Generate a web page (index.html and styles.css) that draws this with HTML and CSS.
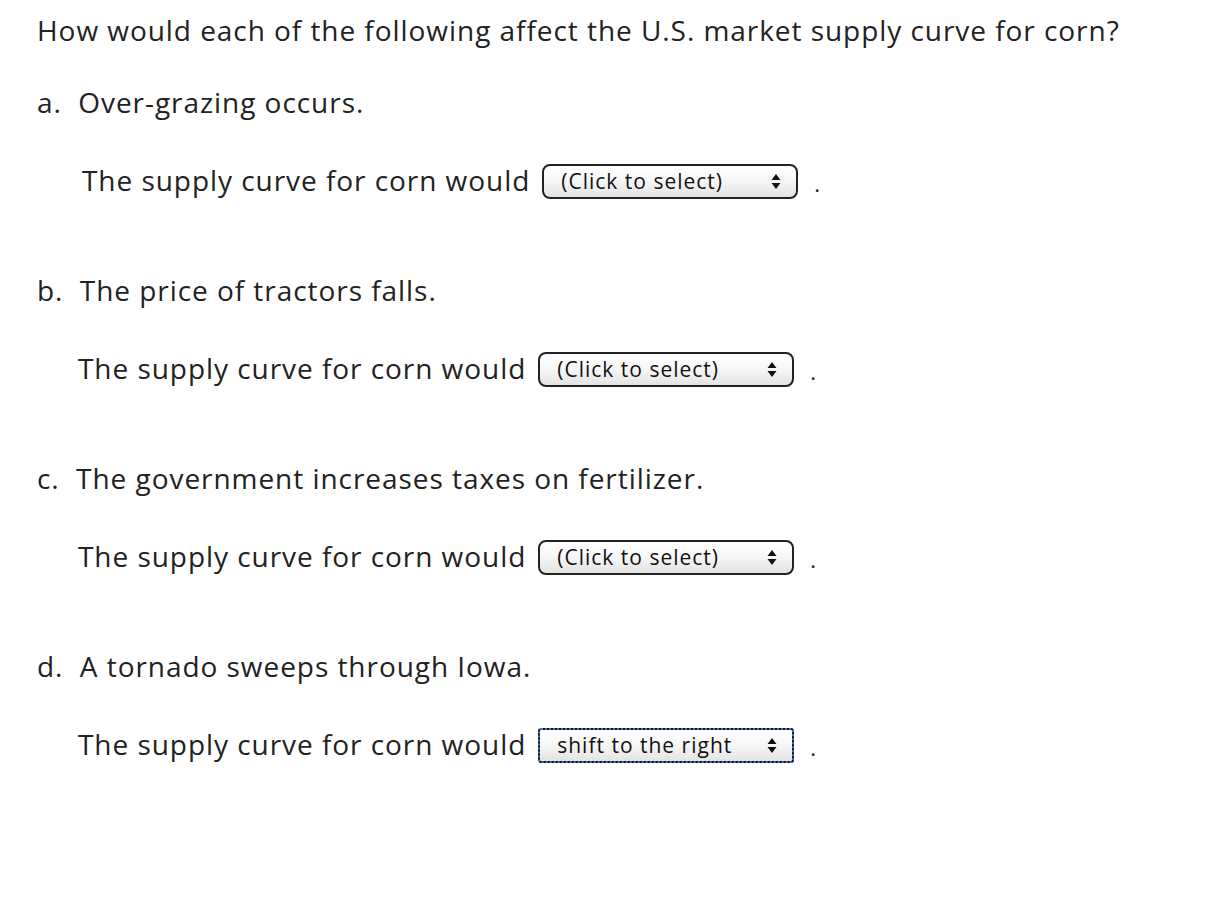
FILE: index.html
```html
<!DOCTYPE html>
<html lang="en">
<head>
<meta charset="utf-8">
<title>Supply curve for corn</title>
<link rel="stylesheet" href="styles.css">
</head>
<body>
<main class="question">
  <p class="prompt">How would each of the following affect the U.S. market supply curve for corn?</p>

  <section class="part">
    <p class="part-title">a.&nbsp; Over-grazing occurs.</p>
    <p class="answer answer-first">The supply curve for corn would
      <span class="select"><span class="select-text">(Click to select)</span><svg class="arrows" width="10" height="17" viewBox="0 0 10 17"><path d="M5 1 L9.5 7 H0.5 Z M5 16 L9.5 10 H0.5 Z" fill="#111"/></svg></span><span class="dot">.</span></p>
  </section>

  <section class="part">
    <p class="part-title">b.&nbsp; The price of tractors falls.</p>
    <p class="answer">The supply curve for corn would
      <span class="select"><span class="select-text">(Click to select)</span><svg class="arrows" width="10" height="17" viewBox="0 0 10 17"><path d="M5 1 L9.5 7 H0.5 Z M5 16 L9.5 10 H0.5 Z" fill="#111"/></svg></span><span class="dot">.</span></p>
  </section>

  <section class="part">
    <p class="part-title">c.&nbsp; The government increases taxes on fertilizer.</p>
    <p class="answer">The supply curve for corn would
      <span class="select"><span class="select-text">(Click to select)</span><svg class="arrows" width="10" height="17" viewBox="0 0 10 17"><path d="M5 1 L9.5 7 H0.5 Z M5 16 L9.5 10 H0.5 Z" fill="#111"/></svg></span><span class="dot">.</span></p>
  </section>

  <section class="part">
    <p class="part-title">d.&nbsp; A tornado sweeps through Iowa.</p>
    <p class="answer">The supply curve for corn would
      <span class="select select-focus"><span class="select-text">shift to the right</span><svg class="arrows" width="10" height="17" viewBox="0 0 10 17"><path d="M5 1 L9.5 7 H0.5 Z M5 16 L9.5 10 H0.5 Z" fill="#111"/></svg></span><span class="dot">.</span></p>
  </section>
</main>
</body>
</html>
```
FILE: styles.css
```css
html, body {
  margin: 0;
  padding: 0;
  background: #ffffff;
}

body {
  font-family: "Open Sans", Lato, sans-serif;
  color: #222222;
}

.question {
  padding: 10px 0 0 37px;
}

p {
  margin: 0;
}

.prompt,
.part-title,
.answer {
  font-size: 28px;
  line-height: 40px;
  letter-spacing: 0.95px;
}

.prompt {
  margin-bottom: 32px;
}

.part {
  display: flex;
  flex-direction: column;
  gap: 38px;
  margin-bottom: 70px;
}

.answer {
  padding-left: 41px;
  display: flex;
  align-items: center;
}

.answer-first {
  padding-left: 45px;
}

.select {
  display: inline-flex;
  align-items: center;
  justify-content: space-between;
  box-sizing: border-box;
  width: 256px;
  height: 35px;
  margin-left: 12px;
  margin-top: 2px;
  padding: 0 15px 0 17px;
  border: 2px solid #222;
  border-radius: 8px;
  background: linear-gradient(#ffffff, #f7f7f7 45%, #e3e3e3);
  font-size: 21px;
  letter-spacing: 1px;
  line-height: 31px;
  color: #111;
}

.select-focus {
  border: 2px dotted #3c76c4;
  border-radius: 3px;
  background:
    linear-gradient(#ffffff, #f7f7f7 45%, #e3e3e3) padding-box,
    #111 border-box;
}

.dot {
  margin-left: 16px;
  font-size: 22px;
  line-height: 20px;
  padding-top: 6px;
}
```
